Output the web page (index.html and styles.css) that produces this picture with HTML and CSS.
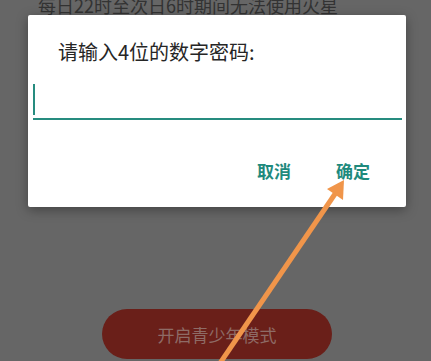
FILE: index.html
```html
<!DOCTYPE html>
<html lang="zh">
<head>
<meta charset="utf-8">
<link rel="stylesheet" href="styles.css">
</head>
<body>
<div class="page">
  <p class="notice">每日22时至次日6时期间无法使用火星</p>
  <div class="spacer"></div>
  <div class="enable-btn">开启青少年模式</div>
</div>
<div class="dialog">
  <div class="dialog-title">请输入4位的数字密码:</div>
  <div class="input"><span class="caret"></span></div>
  <div class="actions">
    <span class="action cancel">取消</span>
    <span class="action ok">确定</span>
  </div>
</div>
<svg class="arrow" width="431" height="361" viewBox="0 0 431 361">
  <line x1="214" y1="372" x2="337" y2="191" stroke="#f0954a" stroke-width="5" stroke-linecap="butt"/>
  <polygon points="344,180 343,200 327,189" fill="#f0954a"/>
</svg>
</body>
</html>
```
FILE: styles.css
```css
html, body {
  margin: 0;
  padding: 0;
  width: 431px;
  height: 361px;
  overflow: hidden;
  background: #666666;
  font-family: "Noto Sans CJK SC", "Noto Sans", sans-serif;
}
.page {
  display: flex;
  flex-direction: column;
  height: 361px;
}
.notice {
  margin: -9px 0 0 38px;
  font-size: 18px;
  line-height: 28px;
  color: #333333;
  white-space: nowrap;
}
.spacer {
  height: 290px;
  flex: none;
}
.enable-btn {
  margin-left: 102px;
  width: 230px;
  height: 50px;
  border-radius: 25px;
  background: #6a1f19;
  color: #8e6b66;
  font-size: 17px;
  display: flex;
  align-items: center;
  justify-content: center;
  flex: none;
}
.dialog {
  position: absolute;
  left: 28px;
  top: 15px;
  width: 378px;
  height: 192px;
  background: #ffffff;
  border-radius: 2px;
  box-shadow: 0 3px 12px rgba(0,0,0,0.35);
  display: flex;
  flex-direction: column;
}
.dialog-title {
  margin: 23px 0 0 30px;
  font-size: 20px;
  line-height: 28px;
  color: #262626;
}
.input {
  margin: 19px 4px 0 5px;
  height: 33px;
  border-bottom: 2px solid #268c7f;
  display: flex;
  align-items: flex-end;
}
.caret {
  width: 2px;
  height: 31px;
  margin-bottom: 3px;
  background: #268c7f;
}
.actions {
  display: flex;
  justify-content: flex-end;
  margin-top: 39px;
  padding-right: 36px;
  gap: 45px;
}
.action {
  font-size: 17px;
  line-height: 24px;
  font-weight: 700;
  color: #1f8a7d;
}
.arrow {
  position: absolute;
  left: 0;
  top: 0;
}
```
